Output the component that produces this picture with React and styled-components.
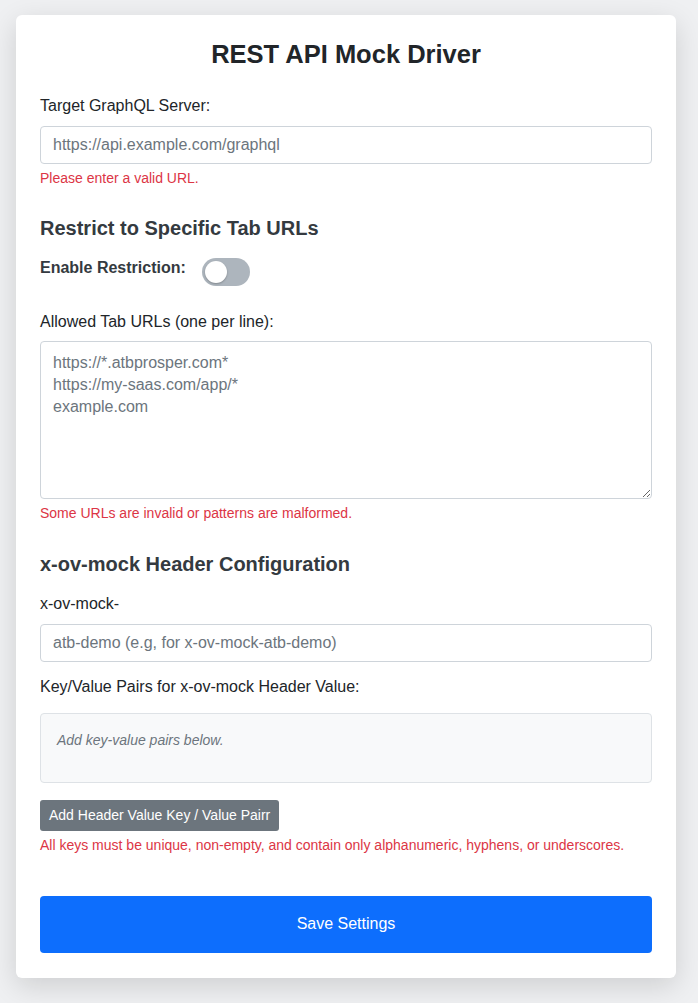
import styled, { createGlobalStyle } from "styled-components"

const GlobalStyle = createGlobalStyle`
    * { box-sizing: border-box; }
    body {
        margin: 0;
        padding: 15px 22px 25px 16px;
        background: #eff0f2;
        font-family: "Liberation Sans", Arial, Helvetica, sans-serif;
        color: #212529;
    }
`;

const App = () => {
    return (
        <>
            <GlobalStyle />
            <Card>
                <Title>REST API Mock Driver</Title>

                <Label htmlFor="target">Target GraphQL Server:</Label>
                <TextInput id="target" placeholder="https://api.example.com/graphql" />
                <ErrorText>Please enter a valid URL.</ErrorText>

                <SectionTitle>Restrict to Specific Tab URLs</SectionTitle>
                <ToggleRow>
                    <ToggleLabel>Enable Restriction:</ToggleLabel>
                    <Toggle>
                        <Knob />
                    </Toggle>
                </ToggleRow>

                <Label htmlFor="urls" $bottom={7}>Allowed Tab URLs (one per line):</Label>
                <UrlArea
                    id="urls"
                    defaultValue={"https://*.atbprosper.com*\nhttps://my-saas.com/app/*\nexample.com"}
                />
                <ErrorText>Some URLs are invalid or patterns are malformed.</ErrorText>

                <SectionTitle $top={28}>x-ov-mock Header Configuration</SectionTitle>
                <Label htmlFor="suffix">x-ov-mock-</Label>
                <TextInput id="suffix" placeholder="atb-demo (e.g, for x-ov-mock-atb-demo)" />

                <Label htmlFor="pairs" $top={13} $bottom={14}>Key/Value Pairs for x-ov-mock Header Value:</Label>
                <PairsBox id="pairs">
                    <EmptyNote>Add key-value pairs below.</EmptyNote>
                </PairsBox>

                <SmallButton>Add Header Value Key / Value Pairr</SmallButton>
                <ErrorText>All keys must be unique, non-empty, and contain only alphanumeric, hyphens, or underscores.</ErrorText>

                <SaveButton>Save Settings</SaveButton>
            </Card>
        </>
    )
}

export default App

const Card = styled.main`
    width: 660px;
    background: #fff;
    border-radius: 6px;
    padding: 24px 24px 25px;
    box-shadow: 0 8px 28px rgba(0, 0, 0, 0.14);
    display: flex;
    flex-direction: column;
`;

const Title = styled.h1`
    margin: 0 0 24px;
    font-size: 25.5px;
    line-height: 1.2;
    font-weight: bold;
    text-align: center;
    color: #212529;
`;

const Label = styled.label`
    display: block;
    font-size: 16px;
    line-height: 24px;
    margin-top: ${(p) => p.$top || 0}px;
    margin-bottom: ${(p) => p.$bottom || 8}px;
    color: #212529;
`;

const TextInput = styled.input`
    width: 100%;
    height: 38px;
    padding: 6px 12px;
    font-family: inherit;
    font-size: 16px;
    color: #212529;
    border: 1px solid #ced4da;
    border-radius: 4px;
    outline: none;

    &::placeholder {
        color: #6c757d;
    }
`;

const UrlArea = styled.textarea`
    width: 100%;
    height: 158px;
    padding: 10px 12px;
    font-family: inherit;
    font-size: 16px;
    line-height: 22.4px;
    color: #6c757d;
    border: 1px solid #ced4da;
    border-radius: 4px;
    resize: vertical;
    outline: none;
`;

const ErrorText = styled.p`
    margin: 4px 0 0;
    font-size: 14px;
    line-height: 21px;
    color: #dc3545;
`;

const SectionTitle = styled.h3`
    margin: ${(p) => p.$top || 27}px 0 16px;
    font-size: 20px;
    line-height: 24px;
    font-weight: bold;
    color: #343a40;
`;

const ToggleRow = styled.div`
    display: flex;
    align-items: flex-start;
    gap: 16px;
    margin-bottom: 24px;
`;

const ToggleLabel = styled.span`
    font-size: 16px;
    line-height: 24px;
    font-weight: bold;
    color: #343a40;
`;

const Toggle = styled.span`
    display: flex;
    align-items: center;
    width: 48px;
    height: 28px;
    margin-top: 2px;
    padding: 0 3px;
    border-radius: 14px;
    background: #adb5bd;
`;

const Knob = styled.span`
    width: 22px;
    height: 22px;
    border-radius: 50%;
    background: #fff;
    box-shadow: 0 1px 2px rgba(0, 0, 0, 0.25);
`;

const PairsBox = styled.div`
    min-height: 70px;
    padding: 16px;
    background: #f8f9fa;
    border: 1px solid #dee2e6;
    border-radius: 4px;
`;

const EmptyNote = styled.p`
    margin: 0;
    font-size: 14px;
    line-height: 21px;
    font-style: italic;
    color: #6c757d;
`;

const SmallButton = styled.button`
    align-self: flex-start;
    margin-top: 17px;
    padding: 5px 9px;
    font-family: inherit;
    font-size: 14px;
    line-height: 21px;
    color: #fff;
    background: #6c757d;
    border: none;
    border-radius: 3px;
    cursor: pointer;
`;

const SaveButton = styled.button`
    margin-top: 40px;
    height: 57px;
    width: 100%;
    font-family: inherit;
    font-size: 16px;
    color: #fff;
    background: #0d6efd;
    border: none;
    border-radius: 4px;
    cursor: pointer;
`;
